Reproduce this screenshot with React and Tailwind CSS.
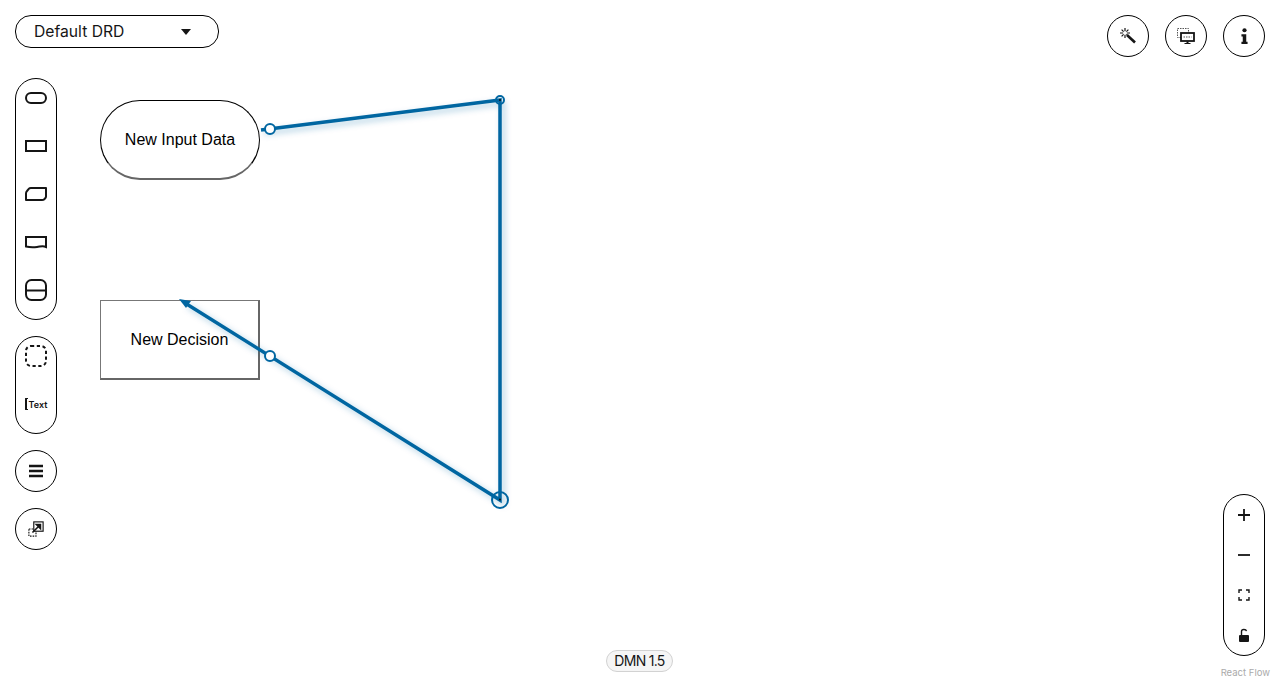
import React from "react";

const uiFont = "font-['Inter',sans-serif]";

function Pill({ children, className = "" }) {
  return (
    <div className={`flex w-[42px] flex-col items-center rounded-[21px] border border-black bg-white ${className}`}>
      {children}
    </div>
  );
}

function RoundButton({ children }) {
  return (
    <div className="flex h-[42px] w-[42px] items-center justify-center rounded-full border border-black bg-white">
      {children}
    </div>
  );
}

function Slot({ children, className = "h-12" }) {
  return <div className={`flex w-full shrink-0 items-center justify-center ${className}`}>{children}</div>;
}

const shape = { fill: "none", stroke: "#151515", strokeWidth: 2 };

function NodePalette() {
  return (
    <Pill className="h-[242px]">
      <Slot className="-mt-[5px] h-12">
        <svg width="24" height="16" viewBox="0 0 24 16">
          <rect x="2" y="3" width="20" height="10" rx="5" {...shape} />
        </svg>
      </Slot>
      <Slot>
        <svg width="24" height="16" viewBox="0 0 24 16">
          <rect x="2" y="3" width="20" height="10" {...shape} />
        </svg>
      </Slot>
      <Slot>
        <svg width="24" height="16" viewBox="0 0 24 16">
          <path d="M2 14V7.5C2 6.5 2.5 5.5 3 5L5 2.6C5.5 2 6 2 7 2H22V10.5C22 11.5 21.5 12 21 12.5L20 13.5C19.5 14 19 14 18 14Z" {...shape} strokeLinejoin="round" />
        </svg>
      </Slot>
      <Slot>
        <svg width="24" height="16" viewBox="0 0 24 16">
          <path d="M2 3H22V13C19 11.5 17 12.5 13 13C9 13.5 6 13.5 2 12.5Z" {...shape} />
        </svg>
      </Slot>
      <Slot>
        <svg width="24" height="24" viewBox="0 0 24 24">
          <rect x="2" y="2" width="20" height="20" rx="5.5" {...shape} />
          <path d="M2 12.5H22" {...shape} />
        </svg>
      </Slot>
    </Pill>
  );
}

function ArtifactPalette() {
  return (
    <Pill className="h-[98px]">
      <Slot className="-mt-[5px] h-12">
        <svg width="24" height="24" viewBox="0 0 24 24">
          <rect x="2" y="2" width="20" height="20" rx="5" fill="none" stroke="#151515" strokeWidth="2" strokeDasharray="3.2 2.6" />
        </svg>
      </Slot>
      <Slot>
        <div className={`flex items-center text-[9px] font-semibold leading-none text-[#151515] ${uiFont}`}>
          <span className="mr-px h-[12px] w-[3px] rounded-l-[1px] border-y-[1.5px] border-l-2 border-[#151515]" />
          Text
        </div>
      </Slot>
    </Pill>
  );
}

function Canvas() {
  const blue = "#0066a1";
  return (
    <svg
      width="1280"
      height="680"
      viewBox="0 0 1280 680"
      className="pointer-events-none absolute top-0 left-0"
    >
      <defs>
        <filter id="edgeShadow" x="-10%" y="-10%" width="120%" height="120%">
          <feDropShadow dx="3" dy="3" stdDeviation="3" floodColor={blue} floodOpacity="0.35" />
        </filter>
      </defs>
      <g filter="url(#edgeShadow)">
        <path d="M261 130L500 100V500L185 303" fill="none" stroke={blue} strokeWidth="3.5" />
      </g>
      <path d="M179 299L191 301L186 308Z" fill={blue} />
      <circle cx="500" cy="100" r="4" fill="none" stroke={blue} strokeWidth="2" />
      <circle cx="500" cy="100" r="1" fill="#111" />
      <circle cx="500" cy="500" r="8" fill="none" stroke={blue} strokeWidth="2" />
      <circle cx="500" cy="499.5" r="1" fill="#111" />
      <circle cx="270" cy="129" r="5" fill="#fff" stroke={blue} strokeWidth="2" />
      <circle cx="270" cy="356" r="5" fill="#fff" stroke={blue} strokeWidth="2" />
    </svg>
  );
}

export default function App() {
  return (
    <div className="relative h-[680px] w-[1280px] overflow-hidden bg-white text-[#151515]">
      {/* diagram nodes sit on a free canvas */}
      <div className="absolute top-[100px] left-[100px] flex h-[80px] w-[160px] items-center justify-center rounded-[40px] border-t border-r border-b-2 border-l border-t-black border-r-black border-b-[#666] border-l-black bg-white font-['Liberation_Sans',sans-serif] text-base text-black">
        New Input Data
      </div>
      <div className="absolute top-[300px] left-[100px] flex h-[80px] w-[160px] items-center justify-center border-t border-r-2 border-b-2 border-l border-t-[#777] border-r-[#666] border-b-[#666] border-l-[#777] bg-white font-['Liberation_Sans',sans-serif] text-base text-black">
        New Decision
      </div>
      <Canvas />

      <div className="relative flex h-full justify-between pt-[15px] pr-[15px] pl-[15px]">
        <div className="flex flex-col">
          <div className={`flex h-[33px] w-[204px] items-center justify-between rounded-2xl border border-black bg-white pt-px pr-[27px] pl-[18px] text-[15.7px] ${uiFont}`}>
            <span>Default DRD</span>
            <span className="h-0 w-0 border-x-[5.5px] border-t-[6px] border-x-transparent border-t-[#151515]" />
          </div>
          <div className="mt-[30px] flex flex-col gap-4">
            <NodePalette />
            <ArtifactPalette />
            <RoundButton>
              <svg width="16" height="14" viewBox="0 0 16 14">
                <path d="M1 2H15M1 7H15M1 12H15" stroke="#151515" strokeWidth="2.4" />
              </svg>
            </RoundButton>
            <RoundButton>
              <svg width="16" height="16" viewBox="0 0 18 18">
                <rect x="1" y="9" width="8" height="8" fill="none" stroke="#151515" strokeWidth="1.3" strokeDasharray="1.8 1.2" />
                <rect x="6.5" y="1" width="10.5" height="10.5" fill="#fff" stroke="#151515" strokeWidth="1.3" />
                <path d="M5 13L13.5 4.5M9.5 4H14V8.5Z" stroke="#151515" strokeWidth="1.8" fill="#151515" />
              </svg>
            </RoundButton>
          </div>
        </div>

        <div className="flex flex-col items-end">
          <div className="flex gap-4">
            <RoundButton>
              <svg width="16" height="16" viewBox="0 0 16 16">
                <path d="M7 7L15 14.5" stroke="#151515" strokeWidth="2.6" />
                <path d="M5 0V3.2M5 6.8V10M0 5H3.2M6.8 5H10M1.6 1.6L3.6 3.6M6.4 6.4L8.4 8.4M8.4 1.6L6.4 3.6M3.6 6.4L1.6 8.4" stroke="#151515" strokeWidth="1.2" />
              </svg>
            </RoundButton>
            <RoundButton>
              <svg width="18" height="16" viewBox="0 0 18 16">
                <rect x="0.5" y="0.5" width="11" height="9" fill="none" stroke="#555" strokeWidth="1" strokeDasharray="1.5 1" />
                <rect x="4" y="5" width="13" height="8" fill="#fff" stroke="#151515" strokeWidth="1.8" />
                <path d="M6.5 9H14.5" stroke="#555" strokeWidth="1" strokeDasharray="1.5 1" />
                <path d="M9.5 13.5H11.5V15H13.5V16H7.5V15H9.5Z" fill="#151515" />
              </svg>
            </RoundButton>
            <RoundButton>
              <svg width="7" height="16" viewBox="0 0 8 18">
                <circle cx="4" cy="2.4" r="2.4" fill="#151515" />
                <path d="M0.5 7H6V15.5H7.5V18H0.5V15.5H2V9.5H0.5Z" fill="#151515" />
              </svg>
            </RoundButton>
          </div>

          <Pill className="mt-[437px] h-[162px] justify-center">
            <Slot className="h-10">
              <svg width="14" height="14" viewBox="0 0 14 14">
                <path d="M7 1V13M1 7H13" stroke="#151515" strokeWidth="1.8" />
              </svg>
            </Slot>
            <Slot className="h-10">
              <svg width="14" height="14" viewBox="0 0 14 14">
                <path d="M1 7H13" stroke="#151515" strokeWidth="1.8" />
              </svg>
            </Slot>
            <Slot className="h-10">
              <svg width="12" height="12" viewBox="0 0 12 12">
                <path d="M1 4V1H4M8 1H11V4M11 8V11H8M4 11H1V8" fill="none" stroke="#151515" strokeWidth="1.4" />
              </svg>
            </Slot>
            <Slot className="h-10">
              <svg width="10" height="14" viewBox="0 0 10 14">
                <path d="M2.5 7V3.5C2.5 0.8 7 0.8 7.5 3.2" fill="none" stroke="#151515" strokeWidth="1.4" />
                <rect x="0" y="7" width="10" height="7" rx="1" fill="#151515" />
              </svg>
            </Slot>
          </Pill>
        </div>
      </div>

      <div className={`absolute top-[650px] left-[606px] flex h-[22px] w-[67px] items-center justify-center rounded-[11px] border border-[#d2d2d2] bg-[#f5f5f5] text-sm tracking-tighter ${uiFont}`}>
        DMN 1.5
      </div>
      <div className={`absolute right-[10px] bottom-[1px] text-[9.5px] leading-[12px] text-[#aaa] ${uiFont}`}>React Flow</div>
    </div>
  );
}
